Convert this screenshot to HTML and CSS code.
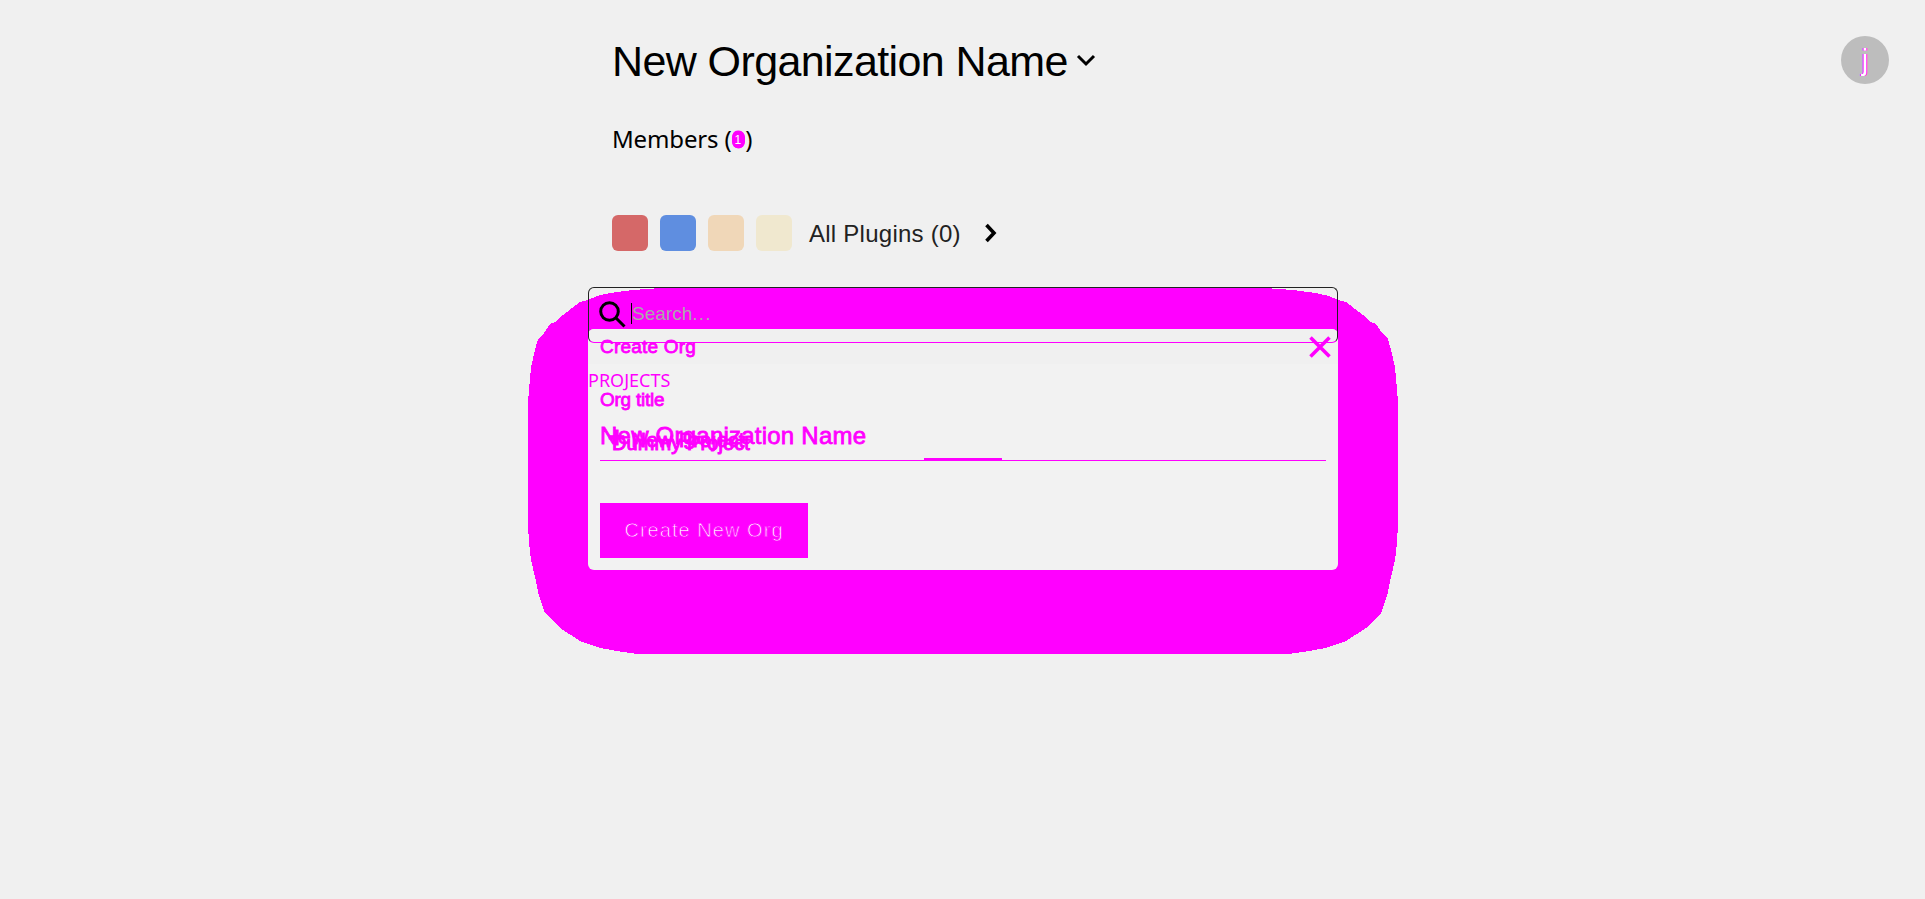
FILE: index.html
```html
<!DOCTYPE html>
<html lang="en">
<head>
<meta charset="utf-8">
<title>New Organization Name</title>
<link rel="stylesheet" href="styles.css">
</head>
<body>
<div class="page">
  <div class="avatar"><span>j</span></div>
  <main class="content">
    <header class="heading">
      <h1>New Organization Name</h1>
      <svg class="chevron-down" width="20" height="14" viewBox="0 0 20 14"><path d="M2 2 10 10 18 2"/></svg>
    </header>
    <p class="members">Members (<span class="count">0<i>1</i></span>)</p>
    <section class="plugins">
      <span class="swatch red"></span><span class="swatch blue"></span><span class="swatch peach"></span><span class="swatch cream"></span>
      <span class="plugins-label">All Plugins (0)</span>
      <svg class="chevron-right" width="14" height="20" viewBox="0 0 14 20"><path d="M2.5 2 10 10 2.5 18"/></svg>
    </section>
    <section class="workspace">
      <svg class="halo" width="870" height="366" viewBox="528 288 870 366" shape-rendering="crispEdges"><path d="M661 288 633 290 610 293 597 296 588 300 580 302 563 315 555 322 550 324 544 333 538 339 535 350 531 367 529 390 528 402V524L529 543 531 560 535 577 539 596 545 613 560 628 580 641 600 648 623 652 638 654H1288L1303 652 1326 648 1346 641 1366 628 1381 613 1387 596 1391 577 1395 560 1397 543 1398 524V402L1397 390 1395 367 1391 350 1388 339 1382 333 1376 324 1371 322 1363 315 1346 302 1338 300 1329 296 1316 293 1293 290 1265 288Z"/></svg>
      <div class="modal">
        <div class="modal-header">
          <span class="modal-title">Create Org</span>
          <svg class="close" width="22" height="22" viewBox="0 0 22 22"><path d="M1.5 1.5 20.5 20.5M20.5 1.5 1.5 20.5"/></svg>
        </div>
        <div class="modal-body">
          <label class="field-label">Org title</label>
          <div class="field">New Organization Name<span class="focus-line"></span></div>
          <button class="create"><span>Create New Org</span></button>
        </div>
      </div>
      <div class="search">
        <svg width="28" height="28" viewBox="0 0 28 28"><circle cx="10.5" cy="11.5" r="8.8"/><path d="M17 18 25.5 26.5"/></svg>
        <span class="caret"></span><span class="placeholder">Search<span class="dots">...</span></span>
      </div>
      <span class="projects">PROJECTS</span>
      <span class="new-project"><b>+</b> New Project</span>
      <span class="dummy">Dummy Project</span>
    </section>
  </main>
</div>
</body>
</html>
```
FILE: styles.css
```css
* { box-sizing: border-box; }
body { margin: 0; background: #f0f0f0; font-family: "Liberation Sans", Arial, sans-serif; color: #000; }
.page { position: relative; height: 899px; overflow: hidden; }
.avatar { position: absolute; left: 1841px; top: 36px; width: 48px; height: 48px; border-radius: 50%; background: #bdbdbd; display: flex; justify-content: center; align-items: center; }
.avatar span { color: #fff; font-size: 29px; line-height: 48px; text-shadow: 1px 0 #f0f, -1px 0 #f0f; }
.content { width: 750px; margin-left: 588px; }
.heading { display: flex; align-items: center; height: 122px; padding-left: 24px; }
h1 { margin: 0; font-size: 43px; line-height: 50px; font-weight: 400; letter-spacing: -.6px; white-space: nowrap; }
svg path, svg circle { fill: none; stroke: #000; stroke-width: 3; }
.chevron-down { margin-left: 8px; }
.members { margin: 0; padding-left: 24px; height: 93px; font: 24px/34px "Noto Sans", sans-serif; letter-spacing: -.15px; }
.count { position: relative; display: inline-block; color: #f0f; -webkit-text-stroke: 1px #f0f; }
.count::before { content: ""; position: absolute; left: 0; top: 9px; width: 13px; height: 17px; border-radius: 6px; background: #f0f; }
.count i { position: absolute; left: 3px; top: 12px; font: 12px/12px "Liberation Sans", sans-serif; color: #fff; -webkit-text-stroke: 0; }
.plugins { display: flex; align-items: center; height: 36px; padding-left: 24px; }
.swatch { width: 36px; height: 36px; border-radius: 6px; margin-right: 12px; }
.red { background: #d56868; }
.blue { background: #5f8ee0; }
.peach { background: #f0d7b8; }
.cream { background: #f0e8cf; }
.plugins-label { margin-left: 5px; padding-top: 2px; font-size: 24px; letter-spacing: .25px; color: #222; white-space: nowrap; }
.chevron-right { margin-left: 23px; }
.chevron-right path { stroke-width: 3.6; }
.workspace { position: relative; padding-top: 78px; }
.halo { position: absolute; left: -60px; top: 37px; }
.halo path { fill: #f0f; stroke: none; }
.modal { position: relative; height: 241px; background: #f2f2f2; border-radius: 6px; color: #f0f; overflow: hidden; }
.modal-header { display: flex; justify-content: space-between; align-items: center; height: 35px; padding: 0 7px 0 12px; background: #f0f0f0; }
.modal-title, .field-label { font-size: 19px; -webkit-text-stroke: .8px #f0f; }
.modal-title { letter-spacing: .2px; }
.close path { stroke: #f0f; stroke-width: 3.6; }
.modal-body { padding: 25px 12px 0; }
.field-label { display: block; line-height: 22px; letter-spacing: -.25px; }
.field { position: relative; height: 50px; padding-top: 11px; font-size: 24px; line-height: 28px; letter-spacing: .23px; border-bottom: 1px solid #f0f; -webkit-text-stroke: .8px #f0f; }
.focus-line { position: absolute; left: 324px; bottom: -1px; width: 78px; height: 3px; background: #f0f; }
.create { display: flex; align-items: center; justify-content: center; width: 208px; height: 55px; margin-top: 42px; padding: 0; border: 0; background: #f0f; color: #fff; font: 20px "Liberation Sans", sans-serif; letter-spacing: 1.05px; -webkit-text-stroke: .8px #f0f; }
.search { position: absolute; left: 0; top: 36px; width: 750px; height: 56px; border: 1px solid #222; border-bottom-color: #f0f; border-radius: 6px; display: flex; align-items: center; padding: 0 10px 3px; }
.caret { width: 1px; height: 21px; margin-left: 4px; background: #000; }
.placeholder { font-size: 19px; color: #aaa; }
.dots { letter-spacing: 1.2px; }
.projects, .new-project, .dummy { position: absolute; color: #f0f; white-space: nowrap; }
.projects { left: 0; top: 117px; font: 18px/25px "Noto Sans", sans-serif; }
.new-project, .dummy { font-size: 20px; line-height: 24px; letter-spacing: .1px; -webkit-text-stroke: 1px #f0f; }
.new-project { left: 20px; top: 176px; letter-spacing: .5px; }
.new-project b { font-size: 29px; line-height: 20px; }
.dummy { left: 24px; top: 180px; }
```
